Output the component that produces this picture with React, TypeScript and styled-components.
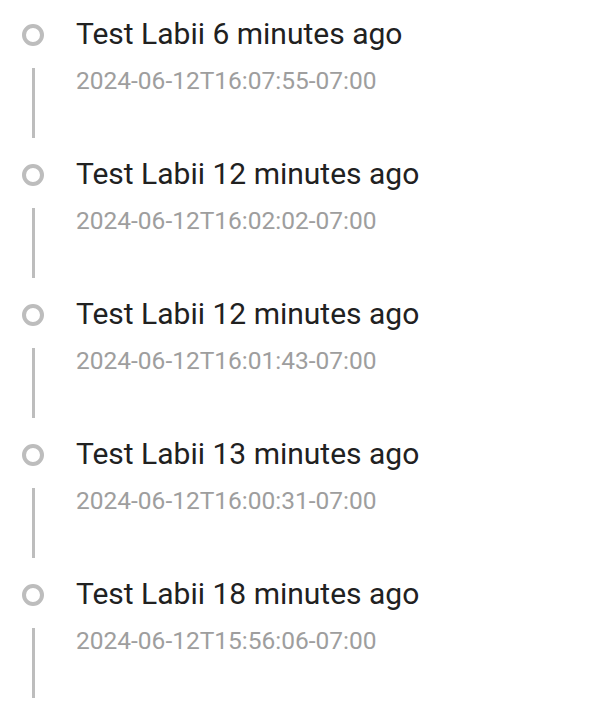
import { createGlobalStyle } from "styled-components";
import styled from "styled-components";

const GlobalStyle = createGlobalStyle`
  body {
    margin: 0;
    background: #fff;
    font-family: Roboto, "Liberation Sans", sans-serif;
  }
`;

const List = styled.div`
  display: flex;
  flex-direction: column;
`;

const Item = styled.div`
  display: flex;
  height: 140px;
`;

const Rail = styled.div`
  width: 66px;
  flex: none;
  display: flex;
  flex-direction: column;
  align-items: center;
`;

const Dot = styled.div`
  width: 22px;
  height: 22px;
  margin-top: 24px;
  box-sizing: border-box;
  border: 4px solid #bdbdbd;
  border-radius: 50%;
`;

const Tail = styled.div`
  width: 3px;
  height: 70px;
  margin-top: 22px;
  background: #bdbdbd;
`;

const Content = styled.div`
  padding-left: 10px;
  padding-top: 15px;
`;

const Title = styled.div`
  font-size: 30px;
  line-height: 38px;
  color: #212121;
`;

const Stamp = styled.div`
  margin-top: 13px;
  font-size: 24.5px;
  line-height: 30px;
  color: #9e9e9e;
`;

const records = [
  { who: "Test Labii", ago: "6 minutes ago", at: "2024-06-12T16:07:55-07:00" },
  { who: "Test Labii", ago: "12 minutes ago", at: "2024-06-12T16:02:02-07:00" },
  { who: "Test Labii", ago: "12 minutes ago", at: "2024-06-12T16:01:43-07:00" },
  { who: "Test Labii", ago: "13 minutes ago", at: "2024-06-12T16:00:31-07:00" },
  { who: "Test Labii", ago: "18 minutes ago", at: "2024-06-12T15:56:06-07:00" },
];

function App() {
  return (
    <>
      <GlobalStyle />
      <List>
        {records.map((r) => (
          <Item key={r.at}>
            <Rail>
              <Dot />
              <Tail />
            </Rail>
            <Content>
              <Title>
                {r.who} {r.ago}
              </Title>
              <Stamp>{r.at}</Stamp>
            </Content>
          </Item>
        ))}
      </List>
    </>
  );
}

export default App;
